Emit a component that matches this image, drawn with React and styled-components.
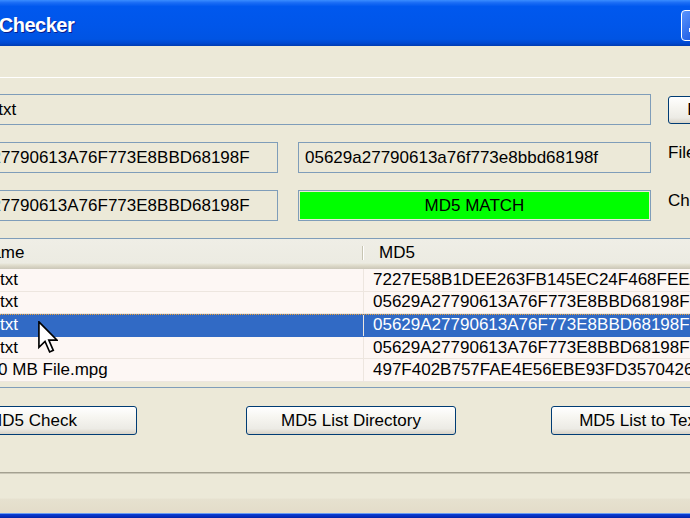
import React from "react";
import styled, { createGlobalStyle } from "styled-components";

const GlobalStyle = createGlobalStyle`
  html, body {
    margin: 0;
    padding: 0;
    background: #ece9d8;
    overflow: hidden;
  }
  body {
    font-family: "Liberation Sans", Arial, sans-serif;
    font-size: 17px;
    color: #000;
  }
`;

const Viewport = styled.div`
  width: 690px;
  height: 518px;
  overflow: hidden;
  position: relative;
`;

const Window = styled.div`
  width: 856px;
  height: 518px;
  margin-left: -72px;
  display: flex;
  flex-direction: column;
  background: #ece9d8;
`;

const TitleBar = styled.div`
  height: 46px;
  flex: none;
  box-sizing: border-box;
  display: flex;
  align-items: center;
  padding: 5px 6px 0 0;
  background: linear-gradient(
    to bottom,
    #3a8dff 0%,
    #1a6cf5 6%,
    #0058ee 14%,
    #0056ea 55%,
    #0054e3 85%,
    #0048d0 94%,
    #003cb0 100%
  );
`;

const Title = styled.div`
  flex: 1;
  padding-left: 25px;
  color: #fff;
  font-weight: bold;
  font-size: 20px;
  letter-spacing: -0.5px;
  text-shadow: 1px 1px 0 #0a1e8c;
`;

const TitleButtons = styled.div`
  display: flex;
  gap: 2px;
`;

const CaptionButton = styled.div`
  width: 31px;
  height: 31px;
  box-sizing: border-box;
  border: 1px solid #fff;
  border-radius: 4px;
  background: ${(p) =>
    p.$close
      ? "linear-gradient(135deg, #e6775c, #c6391d)"
      : "linear-gradient(135deg, #5a95ff, #2663e6 60%, #1c52d8)"};
  display: flex;
  align-items: flex-end;
  padding: 0 0 8px 7px;
`;

const MinGlyph = styled.div`
  width: 9px;
  height: 4px;
  background: #fff;
`;

const MenuBar = styled.div`
  height: 31px;
  flex: none;
  border-bottom: 1px solid #fff;
`;

const Client = styled.div`
  height: 394px;
  flex: none;
  box-sizing: border-box;
  padding-top: 16px;
  display: flex;
  flex-direction: column;
`;

const FieldRow = styled.div`
  display: flex;
  align-items: center;
  height: 31px;
  margin-bottom: 17px;
`;

const Field = styled.div`
  width: ${(p) => p.$w}px;
  height: 31px;
  box-sizing: border-box;
  flex: none;
  border: 1px solid #7f9db9;
  background: #ece9d8;
  margin-right: ${(p) => p.$mr || 0}px;
  display: flex;
  align-items: center;
  padding-left: ${(p) => p.$pl || 6}px;
  white-space: nowrap;
  overflow: hidden;
`;

const MatchField = styled(Field)`
  padding: 1px;
`;

const MatchFill = styled.div`
  flex: 1;
  height: 100%;
  background: #00ff00;
  display: flex;
  align-items: center;
  justify-content: center;
`;

const SideLabel = styled.div`
  white-space: nowrap;
  margin-top: -9px;
`;

const XpButton = styled.button`
  font: inherit;
  font-size: 17px;
  color: #000;
  width: ${(p) => p.$w}px;
  height: ${(p) => p.$h || 29}px;
  flex: none;
  margin-left: ${(p) => p.$ml || 0}px;
  border: 1px solid #003c74;
  border-radius: 3px;
  padding: 0;
  background: linear-gradient(
    to bottom,
    #ffffff 0%,
    #f6f5f0 40%,
    #ecebe5 80%,
    #d8d3c7 100%
  );
  white-space: nowrap;
`;

const List = styled.div`
  width: 836px;
  height: 150px;
  box-sizing: border-box;
  border: 1px solid #7f9db9;
  background: #ece9d8;
  overflow: hidden;
`;

const Header = styled.div`
  height: 30px;
  display: flex;
  box-sizing: border-box;
  background: linear-gradient(
    to bottom,
    #efeee6 0%,
    #ecebe2 80%,
    #e2dfcf 86%,
    #d6d2c2 93%,
    #cbc7b8 100%
  );
`;

const HeaderCell = styled.div`
  width: ${(p) => p.$w}px;
  flex: none;
  box-sizing: border-box;
  display: flex;
  align-items: center;
  padding-left: ${(p) => p.$pl || 16}px;
  padding-bottom: 3px;
  position: relative;
  &::after {
    content: "";
    display: ${(p) => (p.$sep ? "block" : "none")};
    position: absolute;
    right: -1px;
    top: 7px;
    bottom: 9px;
    width: 2px;
    background: linear-gradient(to right, #c7c5b2 50%, #fff 50%);
  }
`;

const Row = styled.div`
  height: 22.6px;
  box-sizing: border-box;
  display: flex;
  background: ${(p) => (p.$sel ? "#316ac5" : "#fdf7f4")};
  color: ${(p) => (p.$sel ? "#fff" : "#000")};
  border-bottom: 1px solid ${(p) => (p.$sel ? "#316ac5" : "#ede6df")};
  border-top: ${(p) => (p.$sel ? "1px dotted #e8a03a" : "none")};
`;

const Cell = styled.div`
  width: ${(p) => p.$w}px;
  flex: none;
  box-sizing: border-box;
  display: flex;
  align-items: center;
  padding-left: ${(p) => p.$pl || 8}px;
  border-right: ${(p) => (p.$grid ? "1px solid #ede6df" : "none")};
  white-space: nowrap;
  overflow: hidden;
`;

const ButtonRow = styled.div`
  display: flex;
  margin-top: 18px;
`;

const StatusBar = styled.div`
  height: 41px;
  flex: none;
  box-sizing: border-box;
  border-top: 1px solid #a4a191;
  box-shadow: inset 0 1px 0 #c9c6b6;
  background: linear-gradient(
    to bottom,
    #ece9d8 0%,
    #ece9d8 62%,
    #e6e1cf 66%,
    #e3dcc9 100%
  );
`;

const BottomFrame = styled.div`
  height: 5px;
  flex: none;
  border-top: 1px solid #6b9cf0;
  background: linear-gradient(to bottom, #0a3fd8, #001c9c);
`;

const Cursor = styled.svg`
  position: absolute;
  left: 38px;
  top: 321px;
  width: 20px;
  height: 33px;
`;

const files = [
  { name: "sample1.txt", md5: "7227E58B1DEE263FB145EC24F468FEEA" },
  { name: "sample2.txt", md5: "05629A27790613A76F773E8BBD68198F" },
  { name: "sample3.txt", md5: "05629A27790613A76F773E8BBD68198F", sel: true },
  { name: "sample4.txt", md5: "05629A27790613A76F773E8BBD68198F" },
  { name: "Large 100 MB File.mpg", md5: "497F402B757FAE4E56EBE93FD3570426" },
];

export default function App() {
  return (
    <>
      <GlobalStyle />
      <Viewport>
        <Window>
          <TitleBar>
            <Title>MD5 Checker</Title>
            <TitleButtons>
              <CaptionButton>
                <MinGlyph />
              </CaptionButton>
              <CaptionButton />
              <CaptionButton $close />
            </TitleButtons>
          </TitleBar>
          <MenuBar />
          <Client>
            <FieldRow>
              <Field $w={723} $mr={17}>
                C:\test1.txt
              </Field>
              <XpButton $w={95} $h={28}>
                Browse
              </XpButton>
            </FieldRow>
            <FieldRow>
              <Field $w={350} $mr={20} $pl={4}>
                05629A27790613A76F773E8BBD68198F
              </Field>
              <Field $w={353} $mr={17}>
                05629a27790613a76f773e8bbd68198f
              </Field>
              <SideLabel>File MD5</SideLabel>
            </FieldRow>
            <FieldRow>
              <Field $w={350} $mr={20} $pl={4}>
                05629A27790613A76F773E8BBD68198F
              </Field>
              <MatchField $w={353} $mr={17}>
                <MatchFill>MD5 MATCH</MatchFill>
              </MatchField>
              <SideLabel>Check MD5</SideLabel>
            </FieldRow>
            <List>
              <Header>
                <HeaderCell $w={434} $pl={18} $sep>
                  File Name
                </HeaderCell>
                <HeaderCell $w={400}>MD5</HeaderCell>
              </Header>
              {files.map((f) => (
                <Row key={f.name} $sel={f.sel}>
                  <Cell $w={435} $pl={2} $grid>
                    {f.name}
                  </Cell>
                  <Cell $w={400} $pl={9}>
                    {f.md5}
                  </Cell>
                </Row>
              ))}
            </List>
            <ButtonRow>
              <XpButton $w={209}>MD5 Check</XpButton>
              <XpButton $w={210} $ml={109}>
                MD5 List Directory
              </XpButton>
              <XpButton $w={210} $ml={95}>
                MD5 List to Text File
              </XpButton>
            </ButtonRow>
          </Client>
          <StatusBar />
          <BottomFrame />
        </Window>
        <Cursor viewBox="0 0 12 20">
          <path
            d="M0.5 0.5 L0.5 16 L4.2 12.4 L7 18.8 L9.2 17.8 L6.5 11.6 L11.5 11.6 Z"
            fill="#fff"
            stroke="#000"
            strokeWidth="1"
            strokeLinejoin="miter"
          />
        </Cursor>
      </Viewport>
    </>
  );
}
